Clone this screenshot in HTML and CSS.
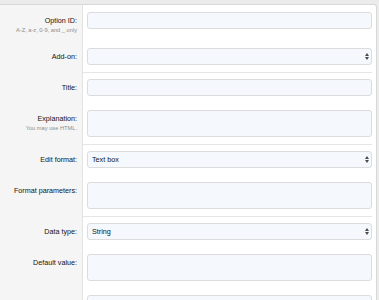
FILE: index.html
```html
<!DOCTYPE html>
<html lang="en">
<head>
  <meta charset="UTF-8" />
  <meta name="viewport" content="width=device-width, initial-scale=1.0" />
  <title>Add option</title>
  <link rel="stylesheet" href="styles.css">
</head>
<body>
  <div class="block">
    <div class="row">
      <div class="label">Option ID:<span class="hint">A-Z, a-z, 0-9, and _ only</span></div>
      <div class="field"><input class="input" type="text"></div>
    </div>
    <div class="row">
      <div class="label">Add-on:</div>
      <div class="field">
        <div class="select-wrap">
          <select class="input select"><option></option></select>
          <svg class="arrows" width="4" height="7" viewBox="0 0 4 7"><path d="M0 3 L2 0 L4 3 Z M0 4 L2 7 L4 4 Z" fill="#4a4a4a"/></svg>
        </div>
      </div>
    </div>

    <div class="row">
      <div class="label">Title:</div>
      <div class="field sep"><input class="input" type="text"></div>
    </div>
    <div class="row">
      <div class="label">Explanation:<span class="hint">You may use HTML.</span></div>
      <div class="field"><textarea class="input area"></textarea></div>
    </div>

    <div class="row">
      <div class="label">Edit format:</div>
      <div class="field sep">
        <div class="select-wrap">
          <select class="input select"><option>Text box</option></select>
          <svg class="arrows" width="4" height="7" viewBox="0 0 4 7"><path d="M0 3 L2 0 L4 3 Z M0 4 L2 7 L4 4 Z" fill="#4a4a4a"/></svg>
        </div>
      </div>
    </div>
    <div class="row">
      <div class="label">Format parameters:</div>
      <div class="field"><textarea class="input area"></textarea></div>
    </div>

    <div class="row">
      <div class="label">Data type:</div>
      <div class="field sep">
        <div class="select-wrap">
          <select class="input select"><option>String</option></select>
          <svg class="arrows" width="4" height="7" viewBox="0 0 4 7"><path d="M0 3 L2 0 L4 3 Z M0 4 L2 7 L4 4 Z" fill="#4a4a4a"/></svg>
        </div>
      </div>
    </div>
    <div class="row">
      <div class="label">Default value:</div>
      <div class="field"><textarea class="input area"></textarea></div>
    </div>
    <div class="row">
      <div class="label"></div>
      <div class="field"><input class="input" type="text"></div>
    </div>
  </div>
</body>
</html>
```

FILE: styles.css
```css
body {
  margin: 0;
  padding: 4px 2px 0 0;
  background-color: #ebebeb;
  font-family: 'Liberation Sans', Arial, sans-serif;
  color: #141414;
}

.block {
  background-color: #fff;
  border: 1px solid #d8d8d8;
  border-left: none;
  border-bottom: none;
  border-radius: 0 3px 0 0;
  overflow: hidden;
}

.row {
  display: grid;
  grid-template-columns: 83px 1fr;
}

.label {
  box-sizing: border-box;
  background-color: #f5f5f5;
  border-right: 1px solid #e3e3e3;
  padding: 9px 5px 7px 4px;
  text-align: right;
  font-size: 7.2px;
  line-height: 13px;
}

.hint {
  display: block;
  font-size: 5.7px;
  line-height: 7px;
  color: #8c8c8c;
}

.field {
  padding: 7px 0 7px 4px;
  margin-right: 4px;
}

.field.sep {
  padding-top: 6px;
  border-top: 1px solid #e5e5e5;
}

.input {
  display: block;
  box-sizing: border-box;
  width: 100%;
  height: 17px;
  margin: 0;
  padding: 0 4px;
  background-color: #f5f8fc;
  border: 1px solid #dcdcdc;
  border-radius: 3px;
  font-family: inherit;
  font-size: 7.2px;
  color: #141414;
  outline: none;
}

.area {
  height: 27px;
  resize: none;
}

.select-wrap {
  position: relative;
}

.select {
  appearance: none;
  -webkit-appearance: none;
}

.arrows {
  position: absolute;
  right: 3px;
  top: 5px;
}
```
